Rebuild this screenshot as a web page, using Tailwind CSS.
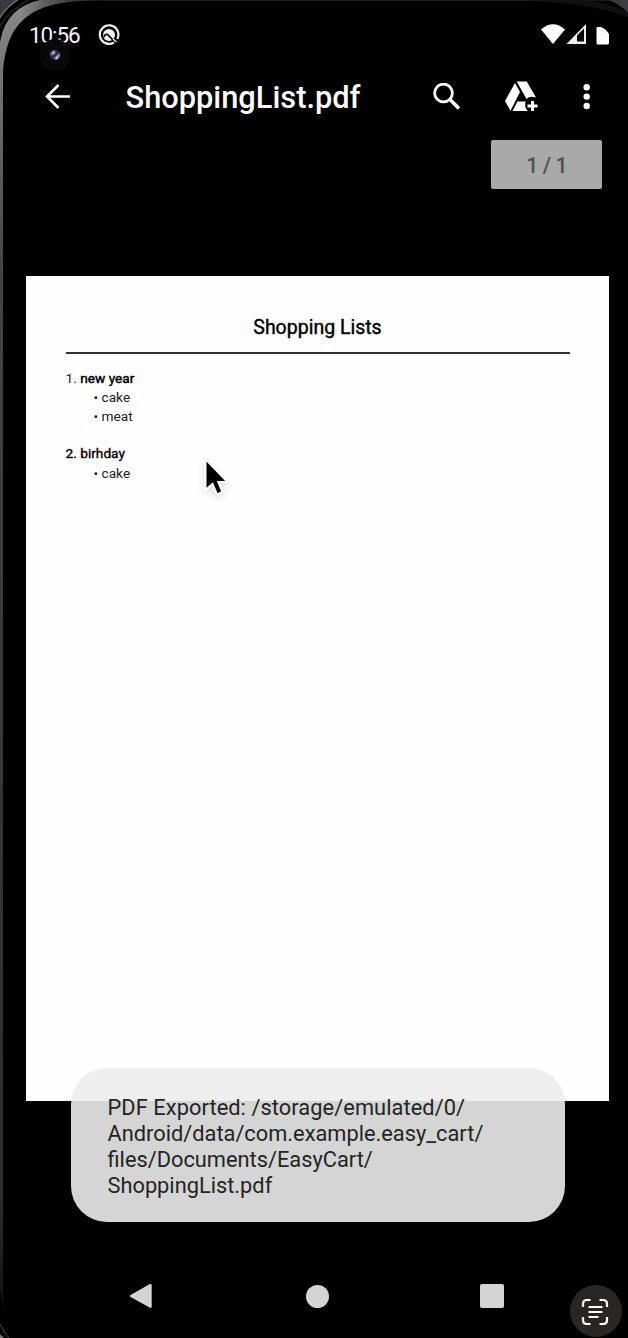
<!DOCTYPE html>
<html lang="en">
<head>
<meta charset="utf-8">
<title>ShoppingList.pdf</title>
<script src="https://cdn.jsdelivr.net/npm/@tailwindcss/browser@4"></script>
</head>
<body class="bg-black">
<main class="relative flex h-[1338px] w-[628px] flex-col overflow-hidden bg-black font-['Roboto',sans-serif]">

  <!-- Device bezel -->
  <svg class="absolute inset-0" width="628" height="1338" viewBox="0 0 628 1338" fill="none">
    <defs>
      <linearGradient id="side" x1="0" y1="0" x2="0" y2="1338" gradientUnits="userSpaceOnUse">
        <stop offset="0" stop-color="#8a8a8a"/><stop offset=".05" stop-color="#777"/><stop offset=".2" stop-color="#444"/><stop offset=".9" stop-color="#2c2c2c"/><stop offset="1" stop-color="#080808"/>
      </linearGradient>
      <linearGradient id="top" x1="20" y1="0" x2="100" y2="0" gradientUnits="userSpaceOnUse">
        <stop offset="0" stop-color="#888"/><stop offset=".4" stop-color="#555"/><stop offset="1" stop-color="#181818"/>
      </linearGradient>
    </defs>
    <path d="M0 0H17Q6 6 0 17Z" fill="#3a3b3f"/>
    <path d="M-1 19Q6 7 19 -1" stroke="#777" stroke-width="1.3"/>
    <path d="M-1 28Q8 11 30 -1" stroke="#222" stroke-width="1.5"/>
    <path d="M0 42Q3 24 14 13L22 21Q6 36 3 70V1290Q3 1300 5 1315L0 1290Z" fill="url(#side)"/>
    <path d="M13.500 13.500Q25 3 40 0H628V1H85Q40 2 21.500 21.500Z" fill="url(#top)"/>
    <path d="M530 1Q590 3 628 17V12Q606 2 582 0Z" fill="#101010"/>
    <path d="M609 0Q620 4 628 13V0Z" fill="#3c3c3e"/>
    <path d="M0 1324Q4 1333 9 1338" stroke="#444"/>
    <path d="M0 1334L4 1338H0Z" fill="#777"/>
  </svg>

  <header class="relative">
    <div class="flex h-[66px] items-start pt-[23px] pl-[29px]">
      <span class="w-[68.5px] text-[22.5px] leading-[25px] tracking-[-1.1px] text-[#f4f4f4]">10:56</span>
      <svg width="22" height="24" viewBox="0 -1 22 24" fill="none">
        <circle cx="11" cy="11" r="6" fill="#eee"/>
        <path d="M16 18.500A9.300 9.300 0 1 1 19.300 15" stroke="#eee" stroke-width="2.200"/>
        <path d="M6 13Q7 9.500 9.500 10.500L15.500 16.500" stroke="#000" stroke-width="1.700"/>
        <path d="M15 15L18.500 18" stroke="#eee" stroke-width="1.500"/>
      </svg>
      <svg class="ml-[421.5px]" width="68" height="22" viewBox="541 23 68 22">
        <path d="M541 29.500Q553 19 565 29.500L553 44Z" fill="#fff"/>
        <path d="M566.500 44L586 24V44Z" fill="#eee"/><path d="M577 35.500L584 28.500V41.500H577Z" fill="#000"/>
        <path d="M597.500 27H601Q606 29 609 34V43Q609 44.500 607.500 44.500H598Q596.500 44.500 596.500 43V28Q596.500 27 597.500 27Z" fill="#fff"/>
      </svg>
    </div>
    <div class="absolute top-[39px] left-[39px] flex size-8 items-center justify-center rounded-full bg-[#080808]">
      <svg width="12" height="12" viewBox="0 0 12 12"><circle cx="6" cy="6" r="5.300" fill="#2c2d38"/><path d="M1 6Q1 1 6 1L7 3L4 7Z" fill="#62647c"/><path d="M5 9L10.500 4Q12 9 7 11Z" fill="#8796bd"/><circle cx="4.500" cy="4" r="1.300" fill="#bcc2d6"/><circle cx="8" cy="8.500" r="1" fill="#c7cede"/></svg>
    </div>
    <div class="flex h-[62px] items-center">
      <svg class="ml-[45px]" width="26" height="26" viewBox="45 84 26 26" fill="none" stroke="#fff" stroke-width="2.600"><path d="M70 96.500H47M58.500 85L47 96.500L58.500 108"/></svg>
      <h1 class="ml-[54.5px] w-[307.5px] pt-[3px] text-[30.8px] font-medium text-[#fafafa]"><span class="whitespace-nowrap">ShoppingList.pdf</span></h1>
      <svg width="28" height="28" viewBox="433 82 28 28" fill="none" stroke="#fff"><circle cx="443.500" cy="92" r="8.900" stroke-width="2.800"/><path d="M450 98.500L459 107.500" stroke-width="3.600"/></svg>
      <svg class="ml-[44px]" width="33" height="32" viewBox="505 81 33 32" fill="#fff">
        <path d="M515 83L520 92L510.500 110.700L505 101Z"/>
        <path d="M516.700 81.500H526.700L536 97.500Q529.500 95.500 526.500 99Z"/>
        <path d="M517.500 101.500H525.500Q524 107.500 528 111H512.500Z"/>
        <path d="M531 101H534V104.500H537.500V107.500H534V111H531V107.500H527.500V104.500H531Z"/>
      </svg>
      <svg class="ml-[44px]" width="10" height="28" viewBox="0 0 10 28" fill="#fff"><circle cx="4.700" cy="4.300" r="3.200"/><circle cx="4.700" cy="13.600" r="3.200"/><circle cx="4.700" cy="23" r="3.200"/></svg>
    </div>
  </header>

  <div class="relative mt-[12px] mr-[26px] flex h-[49px] w-[111px] items-center justify-center self-end rounded-[2px] bg-[#a9a9a9] pt-[4px] text-[21.5px] font-medium tracking-[-1px] [word-spacing:1px] text-[#505050]">1 / 1</div>

  <article class="relative mt-[86.5px] ml-[26px] h-[825.5px] w-[583px] bg-[#fefefe] pt-[39.5px] pr-[39.5px] pl-[39.5px] text-[13.7px] text-[#222]">
    <h2 class="h-[39px] border-b-2 border-[#333] text-center text-[19.5px] leading-[26px] text-black [-webkit-text-stroke:0.4px_black]">Shopping Lists</h2>
    <ul class="pt-[15px]">
      <li><h3 class="h-[19px] leading-[18px]">1. <span class="text-black [-webkit-text-stroke:0.45px_black]">new year</span></h3>
        <ul class="pl-[28px] leading-[18.5px]"><li>• cake</li><li>• meat</li></ul></li>
      <li class="mt-[19px]"><h3 class="h-[19px] leading-[18px] text-black [-webkit-text-stroke:0.35px_black]">2. birhday</h3>
        <ul class="pl-[28px] leading-[20px]"><li>• cake</li></ul></li>
    </ul>
  </article>

  <!-- Mouse pointer -->
  <svg class="absolute top-[452px] left-[200px] drop-shadow-md" width="34" height="48" viewBox="200 452 34 48"><path d="M205.500 459V490L212.500 484L217 494.500L222.500 492L218.300 482H227.500Z" fill="#000" stroke="#fff" stroke-width="2"/></svg>

  <!-- Toast -->
  <div class="absolute top-[1068px] left-[70.5px] h-[154px] w-[494px] rounded-[36px] bg-[#ececec]/90 pt-[27px] pl-[37px] text-[21.8px] leading-[26px] whitespace-nowrap text-[#242424]">
    <span class="tracking-[0.07px]">PDF Exported: /storage/emulated/0/</span><br>Android/data/com.example.easy_cart/<br>files/Documents/EasyCart/<br>ShoppingList.pdf
  </div>

  <nav class="relative mt-auto flex h-[84px] items-center pl-[129px]">
    <svg width="23" height="26" viewBox="0 0 23 26"><path d="M1.500 12L21 1Q22.700 .5 22.700 2V23.500Q22.700 25.500 21 24.700L1.500 14Q.3 13 1.500 12Z" fill="#d4d4d4"/></svg>
    <span class="ml-[154px] size-[23px] rounded-full bg-[#d4d4d4]"></span>
    <span class="ml-[151px] size-6 rounded-[2px] bg-[#d4d4d4]"></span>
  </nav>
  <div class="absolute top-[1285px] left-[570px] flex size-[52px] items-center justify-center rounded-full bg-[#282725]">
    <svg class="mr-[2px]" width="28" height="28" viewBox="0 -1 28 28" fill="none" stroke="#fff" stroke-width="2.200"><path d="M2 9V6Q2 2 6 2H9.500M18.500 2H22Q26 2 26 6V9M26 19V22Q26 26 22 26H18.500M9.500 26H6Q2 26 2 22V19M7.500 9H21.500M7.500 14H21.500M7.500 19H17.500"/></svg>
  </div>
</main>
</body>
</html>
